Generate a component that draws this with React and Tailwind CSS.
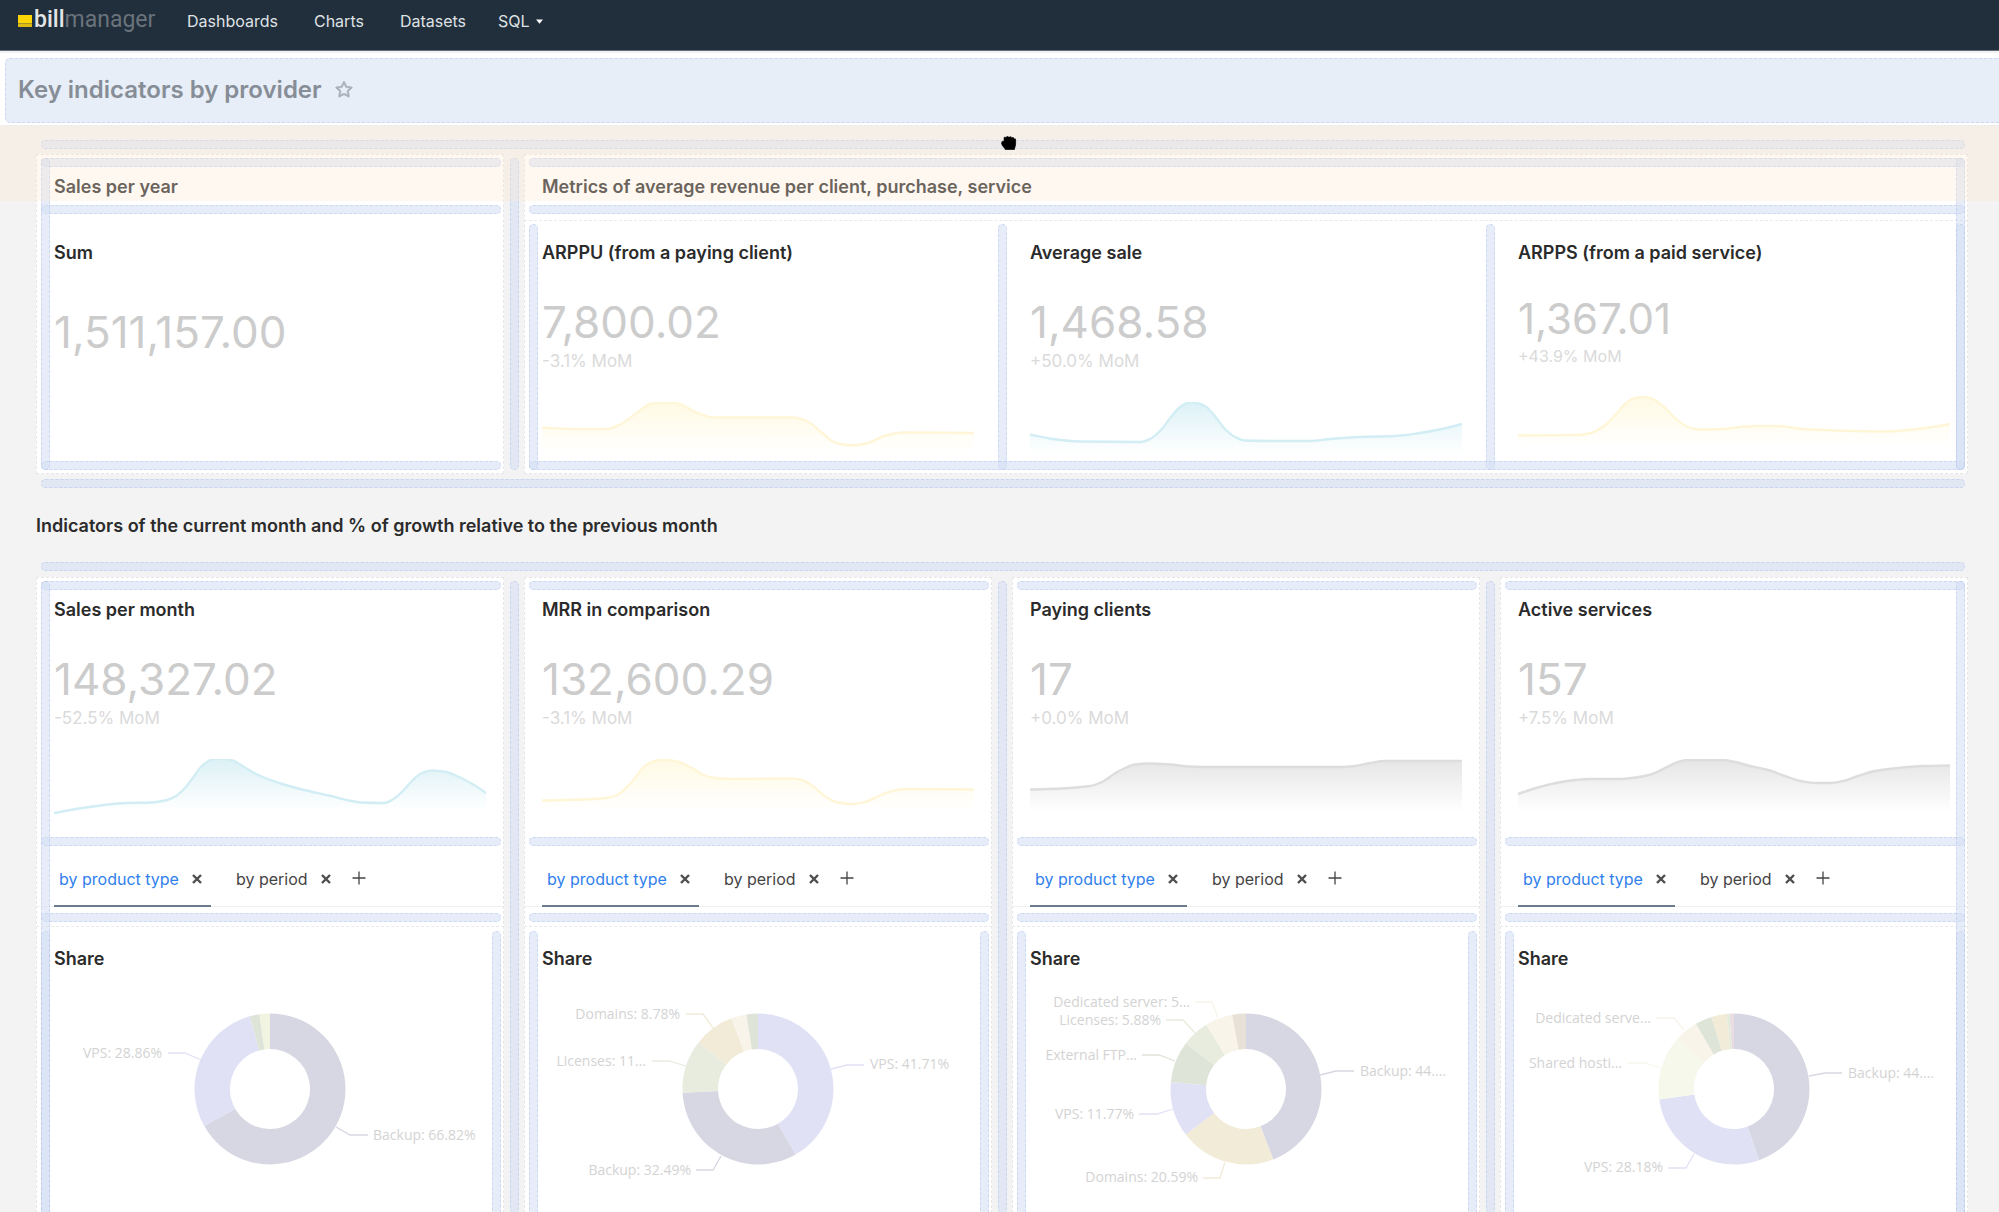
import React, { useState } from "react";
import clsx from "clsx";
import { AiOutlineStar } from "react-icons/ai";

const TONES = {
  cyan: { line: "#d2edf4", fill: "#dcf1f6" },
  yellow: { line: "#fff6d8", fill: "#fffae4" },
  gray: { line: "#dddddd", fill: "#e5e5e5" },
};

const SLICE = {
  backup: "#d7d7e3",
  vps: "#e1e1f6",
  domains: "#f2ebd8",
  licenses: "#e7ecde",
  ftp: "#dfe4d8",
  dedicated: "#f8f4ea",
  hosting: "#f5f8eb",
  lime: "#f0f4e1",
  sand: "#e8e1d7",
  mint: "#e3ecdb",
  pink: "#e9dce2",
};

const arppu = [[0, 25.5], [35, 27], [65, 27], [79, 22], [94, 11.5], [108, 2], [115, 0.5], [130, 0.5], [137, 2], [158, 12], [172, 15.5], [251, 15.5], [265, 19], [279, 30], [293, 40.5], [310, 43.3], [326, 41], [342, 34], [361, 30.5], [432, 31]];
const averageSale = [[0, 32.5], [23, 37], [51, 39.5], [111, 40], [120, 37], [130, 29], [141, 15], [149, 6], [156, 1.5], [163, 0.8], [168, 1.5], [175, 4], [184, 13], [195, 27], [205, 35], [215, 38.5], [240, 39], [281, 39], [300, 37], [330, 35], [365, 34], [390, 31], [412, 27], [432, 22]];
const arpps = [[0, 39.5], [60, 39], [73, 37], [86, 30], [97, 19.5], [106, 9], [114, 3], [122, 1], [132, 2], [145, 10], [158, 23], [170, 31], [180, 33.5], [205, 33], [235, 30], [258, 30], [285, 33], [320, 34.5], [365, 35.5], [395, 33.5], [415, 31], [432, 28]];
const salesMonth = [[0, 54], [25, 49.5], [50, 46], [71, 44], [97, 43.5], [113, 41], [122, 37], [130, 30], [138, 20], [146, 9], [153, 3], [160, 0], [172, 0], [180, 2], [190, 8], [203, 15.5], [225, 24], [250, 31], [275, 36.5], [295, 41.5], [307, 43.5], [330, 44], [338, 41], [347, 34], [358, 22], [367, 14.5], [378, 11.5], [392, 13], [405, 18], [420, 26], [432, 34]];
const mrr = [[0, 41.5], [40, 40.5], [64, 39], [75, 36], [86, 27], [96, 15], [104, 6], [113, 2], [123, 0.5], [135, 2.5], [150, 9], [162, 16], [173, 19], [190, 20], [250, 19.5], [260, 21], [272, 28], [284, 38], [294, 43], [310, 45], [323, 43], [337, 37], [350, 32], [365, 30], [432, 30.5]];
const paying = [[0, 30.5], [32, 29.5], [60, 27], [72, 23], [84, 15], [95, 9], [105, 5.5], [118, 4.5], [140, 5.5], [160, 7.5], [180, 8], [310, 8], [325, 7], [340, 4], [355, 2], [432, 2]];
const active = [[0, 35], [18, 29], [38, 24], [57, 21], [72, 20], [100, 20], [118, 18.5], [133, 15.5], [147, 9], [160, 3], [170, 1], [205, 1], [217, 3], [232, 7], [250, 11], [267, 17], [283, 22], [298, 24], [312, 24], [325, 22], [340, 17], [357, 12], [375, 9.5], [405, 7], [432, 6.5]];

// label positions and leader lines are relative to the centre of the ring
const columns = [
  {
    title: "Sales per month",
    value: "148,327.02",
    change: "-52.5% MoM",
    tone: "cyan",
    points: salesMonth,
    slices: [["backup", 66.82], ["vps", 28.86], ["ftp", 2.1], ["lime", 2.22]],
    labels: [
      { text: "VPS: 28.86%", slice: "vps", x: -108, y: -36, line: "-102,-36 -85,-36 -69,-29" },
      { text: "Backup: 66.82%", slice: "backup", x: 103, y: 46, line: "66,38 80,46 98,46" },
    ],
  },
  {
    title: "MRR in comparison",
    value: "132,600.29",
    change: "-3.1% MoM",
    tone: "yellow",
    points: mrr,
    slices: [["vps", 41.71], ["backup", 32.49], ["licenses", 11.3], ["domains", 8.78], ["dedicated", 3.25], ["ftp", 2.47]],
    labels: [
      { text: "Domains: 8.78%", slice: "domains", x: -78, y: -75, line: "-72,-75 -55,-75 -45,-61" },
      { text: "Licenses: 11...", slice: "licenses", x: -112, y: -28, line: "-106,-28 -89,-28 -72,-23" },
      { text: "VPS: 41.71%", slice: "vps", x: 112, y: -25, line: "73,-20 89,-24 106,-24" },
      { text: "Backup: 32.49%", slice: "backup", x: -67, y: 81, line: "-62,81 -45,81 -37,67" },
    ],
  },
  {
    title: "Paying clients",
    value: "17",
    change: "+0.0% MoM",
    tone: "gray",
    points: paying,
    slices: [["backup", 44.12], ["domains", 20.59], ["vps", 11.77], ["ftp", 8.82], ["licenses", 5.88], ["dedicated", 5.88], ["sand", 2.94]],
    labels: [
      { text: "Dedicated server: 5...", slice: "dedicated", x: -56, y: -87, line: "-51,-87 -34,-87 -28,-71" },
      { text: "Licenses: 5.88%", slice: "licenses", x: -85, y: -69, line: "-80,-69 -63,-69 -51,-56" },
      { text: "External FTP...", slice: "ftp", x: -109, y: -34, line: "-104,-34 -87,-34 -71,-28" },
      { text: "VPS: 11.77%", slice: "vps", x: -112, y: 25, line: "-107,25 -89,25 -73,20" },
      { text: "Domains: 20.59%", slice: "domains", x: -48, y: 88, line: "-43,89 -26,89 -21,73" },
      { text: "Backup: 44....", slice: "backup", x: 114, y: -18, line: "74,-14 90,-18 108,-18" },
    ],
  },
  {
    title: "Active services",
    value: "157",
    change: "+7.5% MoM",
    tone: "gray",
    points: active,
    slices: [["backup", 44.6], ["vps", 28.18], ["hosting", 13.8], ["dedicated", 5], ["ftp", 3.6], ["domains", 3.3], ["mint", 0.6], ["pink", 0.92]],
    labels: [
      { text: "Dedicated serve...", slice: "dedicated", x: -83, y: -71, line: "-78,-71 -60,-71 -50,-59" },
      { text: "Shared hosti...", slice: "hosting", x: -112, y: -26, line: "-106,-26 -89,-26 -73,-21" },
      { text: "VPS: 28.18%", slice: "vps", x: -71, y: 78, line: "-66,79 -48,79 -40,65" },
      { text: "Backup: 44....", slice: "backup", x: 114, y: -16, line: "75,-13 91,-16 108,-16" },
    ],
  },
];

// monotone cubic through the points, so flat parts stay flat
function smoothPath(points) {
  const slopes = points.slice(1).map((p, i) => (p[1] - points[i][1]) / (p[0] - points[i][0]));
  const tangents = points.map((_, i) => {
    if (i === 0) return slopes[0];
    if (i === points.length - 1) return slopes[i - 1];
    const a = slopes[i - 1];
    const b = slopes[i];
    return a * b <= 0 ? 0 : (2 * a * b) / (a + b);
  });
  let d = `M${points[0][0]} ${points[0][1]}`;
  for (let i = 1; i < points.length; i++) {
    const [x0, y0] = points[i - 1];
    const [x1, y1] = points[i];
    const h = (x1 - x0) / 3;
    d += `C${x0 + h} ${y0 + h * tangents[i - 1]} ${x1 - h} ${y1 - h * tangents[i]} ${x1} ${y1}`;
  }
  return d;
}

function arcPath(start, end) {
  const at = (r, t) => `${r * Math.sin(t * 2 * Math.PI)} ${-r * Math.cos(t * 2 * Math.PI)}`;
  const large = end - start > 0.5 ? 1 : 0;
  return `M${at(75.5, start)}A75.5 75.5 0 ${large} 1 ${at(75.5, end)}L${at(40, end)}A40 40 0 ${large} 0 ${at(40, start)}Z`;
}

function Zone({ className }) {
  return (
    <div className={clsx("rounded-[5px] border border-dashed border-[#8fa6ea]/30 bg-[#d1dff3]/55", className)}></div>
  );
}

function RowZone({ className }) {
  return <Zone className={clsx("ml-[5px] mr-[3px] h-[9px] shrink-0", className)} />;
}

function Gutter({ className }) {
  return (
    <div className={clsx("flex w-5 shrink-0 pl-[6px]", className)}>
      <Zone className="w-[9px]" />
    </div>
  );
}

function Card({ className, children }) {
  return (
    <section className={clsx("relative flex min-w-0 flex-col bg-white pt-1 outline-1 -outline-offset-1 outline-dashed outline-[#e6e6e6]", className)}>
      {children}
    </section>
  );
}

function Heading({ children }) {
  return <h2 className="h-[38px] shrink-0 px-[18px] text-lg leading-10 font-semibold text-[#2b2b2b]">{children}</h2>;
}

function Sparkline({ id, tone, points }) {
  const { line, fill } = TONES[tone];
  const d = smoothPath(points);
  return (
    <svg className="block h-14 w-full" viewBox="0 0 432 56" preserveAspectRatio="none">
      <defs>
        <linearGradient id={id} x1="0" y1="0" x2="0" y2="52" gradientUnits="userSpaceOnUse">
          <stop offset="0" stopColor={fill} />
          <stop offset="1" stopColor={fill} stopOpacity="0" />
        </linearGradient>
      </defs>
      <path d={`${d}V52H0Z`} fill={`url(#${id})`} />
      <path d={d} fill="none" stroke={line} strokeWidth="2.4" vectorEffect="non-scaling-stroke" />
    </svg>
  );
}

function Metric({ id, title, value, change, tone, points, compact }) {
  return (
    <div className="min-w-0 flex-1">
      <Heading>{title}</Heading>
      <div className={clsx("px-[18px]", compact ? "pt-[27px]" : "pt-7")}>
        <div className={clsx("text-[#cccccc]", compact ? "text-[42px] leading-[42px]" : "text-[44px] leading-[46px]")}>{value}</div>
        <div className={clsx("text-[#dadada]", compact ? "pt-[7px] text-base leading-[18px]" : "pt-[6px] text-[17px] leading-5")}>{change}</div>
        <div className="pt-[31px]">
          <Sparkline id={id} tone={tone} points={points} />
        </div>
      </div>
    </div>
  );
}

function CloseIcon() {
  return (
    <svg className="size-3" viewBox="0 0 12 12" fill="none" stroke="#4d4d4d" strokeWidth="2.4">
      <path d="M2 2L10 10M10 2L2 10" />
    </svg>
  );
}

function Tabs() {
  const [current, setCurrent] = useState("by product type");
  return (
    <div className="flex h-[61px] shrink-0 gap-5 border-b border-[#f0f0f0] px-[18px] pt-[6px]" role="tablist">
      {["by product type", "by period"].map((name) => (
        <div
          key={name}
          className={clsx(
            "-mb-px flex items-center gap-3 border-b-2 pr-2 pl-[5px]",
            current === name ? "border-[#6b7c8d]" : "border-transparent"
          )}
        >
          <button
            role="tab"
            aria-selected={current === name}
            className={clsx("text-base", current === name ? "text-[#2f80ed]" : "text-[#444444]")}
            onClick={() => setCurrent(name)}
          >
            {name}
          </button>
          <button aria-label={"Remove " + name}>
            <CloseIcon />
          </button>
        </div>
      ))}
      <button className="-ml-2 pb-[3px]" aria-label="Add tab">
        <svg className="size-[14px]" viewBox="0 0 14 14" fill="none" stroke="#444444" strokeWidth="1.3">
          <path d="M7 0.5V13.5M0.5 7H13.5" />
        </svg>
      </button>
    </div>
  );
}

function Donut({ slices, labels }) {
  let total = 0;
  return (
    <svg className="block h-[222px] w-full" viewBox="-234 -112 468 222">
      {slices.map(([name, share]) => {
        const start = total;
        total += share / 100;
        return <path key={name} d={arcPath(start, total)} fill={SLICE[name]} />;
      })}
      {labels.map((label) => (
        <g key={label.text}>
          <polyline points={label.line} fill="none" stroke={SLICE[label.slice]} strokeWidth="1.3" />
          <text
            className="font-['Open_Sans',sans-serif] text-[14px]"
            x={label.x}
            y={label.y + 5}
            textAnchor={label.x < 0 ? "end" : "start"}
            fill="#d3d3d3"
          >
            {label.text}
          </text>
        </g>
      ))}
    </svg>
  );
}

function Header() {
  return (
    <header className="flex h-[51px] shrink-0 border-b border-[#65707b] bg-[#212e3b]">
      <a href="#" className="flex h-[42px] w-[163px] shrink-0 items-center pl-[18px] font-[Roboto,sans-serif] text-[23px]">
        <svg className="mr-[2px] h-3 w-[14px]" viewBox="0 0 14 12">
          <path fill="#fbd506" d="M0 0H14V8H0Z" />
          <path fill="#a8932a" d="M0 8H14V9H0Z" />
          <path fill="#dcbb14" d="M0 9H14V12H0Z" />
        </svg>
        <span className="-mt-[2px] font-medium text-[#e3e5e7]">bill</span>
        <span className="-mt-[2px] text-[#6a737b]">manager</span>
      </a>
      <nav className="flex h-[42px] items-center gap-9 pl-6 text-base text-[#dfe2e5]">
        <a href="#">Dashboards</a>
        <a href="#">Charts</a>
        <a href="#">Datasets</a>
        <button className="-ml-1 flex items-center gap-[6px]">
          SQL
          <svg className="h-[5px] w-[7px]" viewBox="0 0 7 5">
            <path fill="#ffffff" d="M0 0.5H7L3.5 4.8Z" />
          </svg>
        </button>
      </nav>
    </header>
  );
}

function GrabCursor() {
  return (
    <svg className="absolute top-[9px] left-1/2 h-4 w-[17px]" viewBox="0 0 17 16">
      <path
        fill="#000000"
        stroke="#ffffff"
        strokeOpacity="0.5"
        strokeWidth="0.6"
        d="M3.6 3.2C3.6 1.9 5.2 1.4 6 2.3C6.3 0.9 8.3 0.7 8.9 1.9C9.6 0.8 11.4 1 11.8 2.4C12.6 1.7 14 2.2 14.2 3.4C15.2 2.9 16.1 3.7 16.1 4.8V9C16.1 11.5 15 12.4 14.8 15H5C4.4 12.9 1.6 11.2 1.1 8.8C0.9 7.2 1.5 5.9 3.6 5.8Z"
      />
    </svg>
  );
}

export default function App() {
  return (
    <div className="flex min-h-screen flex-col overflow-hidden bg-[#f3f3f3] font-[Inter,sans-serif]">
      <Header />
      <div className="shrink-0 border-b border-[#eeeeee] bg-white pt-[7px] pb-[2px] pl-[5px] shadow-[inset_0_2px_1px_#f1f1f1]">
        <div className="flex h-[65px] items-center gap-3 rounded-l-[5px] border border-r-0 border-dashed border-[#ccd7f3] bg-[#e7eef8] pb-[2px] pl-3">
          <h1 className="text-2xl font-semibold text-[#868d96]">Key indicators by provider</h1>
          <button aria-label="Favorite" className="text-[#a9b0ba]">
            <AiOutlineStar size={20} stroke="currentColor" strokeWidth={36} />
          </button>
        </div>
      </div>

      <main className="relative flex flex-1 flex-col pt-[14px] pr-[31px] pl-9">
        <RowZone />
        <div className="mt-[5px] flex h-[320px] shrink-0">
          <Card className="w-[calc((100%-60px)/4)] pb-1">
            <RowZone />
            <Heading>Sales per year</Heading>
            <RowZone />
            <div className="flex-1 pt-[19px]">
              <Heading>Sum</Heading>
              <div className="px-[18px] pt-[38px] text-[44px] leading-[46px] text-[#cccccc]">1,511,157.00</div>
            </div>
            <RowZone />
            <Zone className="absolute inset-y-1 left-[5px] w-[9px]" />
          </Card>
          <Gutter className="py-1" />
          <Card className="flex-1 pb-1">
            <RowZone />
            <Heading>Metrics of average revenue per client, purchase, service</Heading>
            <RowZone />
            <div className="mt-[6px] flex flex-1 border-t border-dashed border-[#e9e9e9]">
              <div className="flex min-w-0 flex-1 pt-3">
                <Metric id="arppu" title="ARPPU (from a paying client)" value="7,800.02" change="-3.1% MoM" tone="yellow" points={arppu} />
              </div>
              <Gutter className="-mb-[9px] pt-[3px]" />
              <div className="flex min-w-0 flex-1 pt-3">
                <Metric id="average" title="Average sale" value="1,468.58" change="+50.0% MoM" tone="cyan" points={averageSale} />
              </div>
              <Gutter className="-mb-[9px] pt-[3px]" />
              <div className="flex min-w-0 flex-1 pt-3">
                <Metric id="arpps" title="ARPPS (from a paid service)" value="1,367.01" change="+43.9% MoM" tone="yellow" points={arpps} compact />
              </div>
            </div>
            <RowZone />
            <Zone className="absolute top-[70px] bottom-1 left-[5px] w-[9px]" />
            <Zone className="absolute inset-y-1 right-[3px] w-[9px]" />
            <Zone className="absolute top-[70px] right-[3px] bottom-1 w-[9px]" />
          </Card>
        </div>
        <RowZone className="mt-[5px]" />
        <h2 className="h-[74px] shrink-0 text-lg leading-[76px] font-semibold text-[#2b2b2b]">
          Indicators of the current month and % of growth relative to the previous month
        </h2>
        <RowZone />

        <div className="mt-[6px] -mb-px flex flex-1">
          {columns.map((column, i) => (
            <React.Fragment key={column.title}>
              {i > 0 && <Gutter className="pt-1" />}
              <Card className="flex-1">
                <RowZone />
                <div className="flex h-[247px] shrink-0">
                  <Metric id={`spark-${i}`} {...column} />
                </div>
                <RowZone />
                <Tabs />
                <RowZone className="mt-[6px]" />
                <div className="relative mt-1 flex-1 border-t border-dashed border-[#e9e9e9] pt-3">
                  <Heading>Share</Heading>
                  <Donut slices={column.slices} labels={column.labels} />
                  <Zone className="absolute top-1 bottom-0 left-[5px] w-[9px] rounded-b-none border-b-0" />
                  <Zone className="absolute top-1 right-[3px] bottom-0 w-[9px] rounded-b-none border-b-0" />
                </div>
                {i === 0 && <Zone className="absolute top-1 bottom-0 left-[5px] w-[9px] rounded-b-none border-b-0" />}
                {i === columns.length - 1 && <Zone className="absolute top-1 right-[3px] bottom-0 w-[9px] rounded-b-none border-b-0" />}
              </Card>
            </React.Fragment>
          ))}
        </div>

        {/* drop area highlight for the dragged header */}
        <div className="pointer-events-none absolute inset-x-0 top-0 h-[75px] bg-[#ffe7d2]/30"></div>
        <GrabCursor />
      </main>
    </div>
  );
}
